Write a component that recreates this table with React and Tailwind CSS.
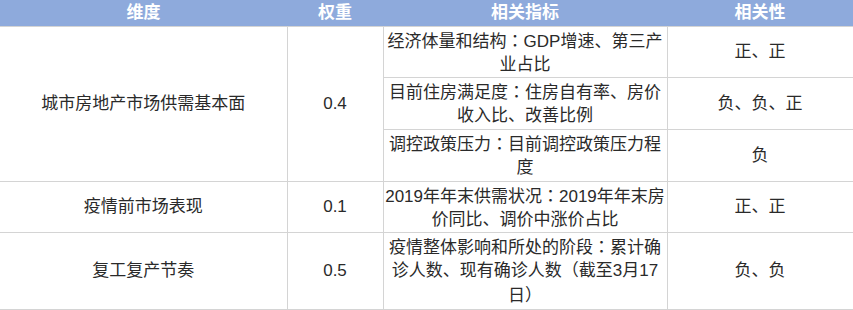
import React from "react";

const C = () => <span className="font-['Noto_Sans_CJK_TC',sans-serif]">：</span>;

const rows = [
	{ dim: "城市房地产市场供需基本面", weight: "0.4", span: 3, h: "h-[51px]", index: [["经济体量和结构", "GDP增速、第三产"], "业占比"], corr: "正、正" },
	{ h: "h-[52px]", index: [["目前住房满足度", "住房自有率、房价"], "收入比、改善比例"], corr: "负、负、正" },
	{ h: "h-[52px]", index: [["调控政策压力", "目前调控政策压力程"], "度"], corr: "负" },
	{ dim: "疫情前市场表现", weight: "0.1", span: 1, h: "h-[51px]", index: [["2019年年末供需状况", "2019年年末房"], "价同比、调价中涨价占比"], corr: "正、正" },
	{ dim: "复工复产节奏", weight: "0.5", span: 1, h: "h-[77px]", index: [["疫情整体影响和所处的阶段", "累计确"], "诊人数、现有确诊人数（截至3月17", "日）"], corr: "负、负" },
];

const cell = "border border-[#d4d4d4] text-center align-middle p-0 whitespace-nowrap";

export default function App() {
	return (
		<div className="w-[853px] h-[310px] bg-white overflow-hidden text-[17px] leading-[25px] text-[#2a2a2a] font-['Liberation_Sans','Noto_Sans_CJK_SC',sans-serif]">
			<table className="w-[853px] table-fixed border-collapse">
				<colgroup>
					<col className="w-[287px]" />
					<col className="w-[96px]" />
					<col className="w-[284px]" />
					<col className="w-[186px]" />
				</colgroup>
				<thead>
					<tr className="h-[26px] bg-[#8eaadc] text-white font-bold">
						<th className="p-0 border-b border-[#d4d4d4]"><div className="h-[25px]">维度</div></th>
						<th className="p-0 border-b border-[#d4d4d4]"><div className="h-[25px]">权重</div></th>
						<th className="p-0 border-b border-[#d4d4d4]"><div className="h-[25px]">相关指标</div></th>
						<th className="p-0 border-b border-[#d4d4d4]"><div className="h-[25px]">相关性</div></th>
					</tr>
				</thead>
				<tbody>
					{rows.map((r, i) => (
						<tr key={i} className={r.h}>
							{r.dim && (
								<>
									<td rowSpan={r.span} className={`${cell} border-l-0`}><div className="h-[25px]">{r.dim}</div></td>
									<td rowSpan={r.span} className={cell}><div className="h-[25px]">{r.weight}</div></td>
								</>
							)}
							<td className={cell}>
								{r.index.map((line, j) => (
									<div key={j} className="h-[25px]">
										{Array.isArray(line) ? (
											<>
												{line[0]}
												<C />
												{line[1]}
											</>
										) : (
											line
										)}
									</div>
								))}
							</td>
							<td className={cell}><div className="h-[25px]">{r.corr}</div></td>
						</tr>
					))}
				</tbody>
			</table>
		</div>
	);
}
